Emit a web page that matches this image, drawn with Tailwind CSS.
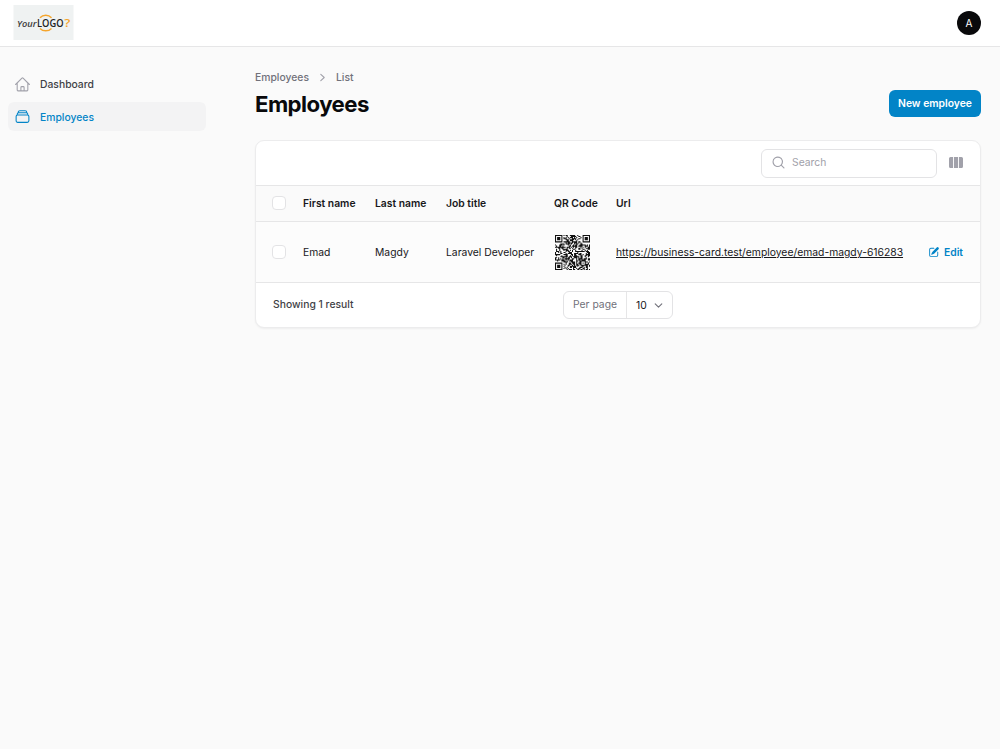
<!DOCTYPE html>
<html lang="en">
<head>
    <meta charset="UTF-8">
    <title>Employees</title>
    <script src="https://cdn.jsdelivr.net/npm/@tailwindcss/browser@4"></script>
</head>
<body class="min-h-screen bg-[#fafafa] font-[Inter,sans-serif] text-[10.35px] leading-4 text-[#18181b]">
<header class="flex h-[47px] items-center justify-between border-b border-[#e6e6e7] bg-white pl-[13px] pr-[19px]">
    <svg class="h-9 w-[61px]" viewBox="0 0 61 36">
        <rect x=".5" width="60" height="35" fill="#eff2f2"/>
        <path d="M27 12.8a8 8 0 0 1 11.5 0M27 23.4a8 8 0 0 0 11.5 0" fill="none" stroke="#f5a52c" stroke-width="1.5"/>
        <text x="4" y="22" font-size="9" font-weight="600" font-style="italic" fill="#3b3b3b" textLength="19.5" lengthAdjust="spacingAndGlyphs" font-family="Open Sans, sans-serif">Your</text>
        <text x="24" y="22" font-size="10" font-weight="600" fill="#222" textLength="26.5" lengthAdjust="spacingAndGlyphs" font-family="Open Sans, sans-serif">LOGO</text>
        <text x="51.2" y="22" font-size="10.5" font-weight="600" fill="#f5a52c" textLength="6" lengthAdjust="spacingAndGlyphs" font-family="Open Sans, sans-serif">?</text>
    </svg>
    <div class="flex size-6 items-center justify-center rounded-full bg-[#09090b] text-[10px] text-white">A</div>
</header>

<div class="flex">
    <aside class="w-[206px] shrink-0 pl-2 pt-[23px] font-medium">
        <nav class="space-y-[3px]">
            <a class="flex h-[29px] items-center gap-[9px] rounded-md px-[6px] text-[#3f3f46]">
                <svg class="size-[17px] text-[#a1a1aa]" viewBox="0 0 24 24" fill="none" stroke="currentColor" stroke-width="1.5" stroke-linecap="round" stroke-linejoin="round"><path d="m2.25 12 8.954-8.955c.44-.439 1.152-.439 1.591 0L21.75 12M4.5 9.75v10.125c0 .621.504 1.125 1.125 1.125H9.75v-4.875c0-.621.504-1.125 1.125-1.125h2.25c.621 0 1.125.504 1.125 1.125V21h4.125c.621 0 1.125-.504 1.125-1.125V9.75M8.25 21h8.25"/></svg>
                <span class="pb-[2px]">Dashboard</span>
            </a>
            <a class="flex h-[29px] items-center gap-[9px] rounded-md bg-[#f3f3f4] px-[6px] text-[#0284c7]">
                <svg class="size-[17px]" viewBox="0 0 24 24" fill="none" stroke="currentColor" stroke-width="1.5" stroke-linecap="round" stroke-linejoin="round"><path d="M6 6.878V6a2.25 2.25 0 0 1 2.25-2.25h7.5A2.25 2.25 0 0 1 18 6v.878m-12 0c.235-.083.487-.128.75-.128h10.5c.263 0 .515.045.75.128m-12 0A2.25 2.25 0 0 0 4.5 9v.878m13.5-3A2.25 2.25 0 0 1 19.5 9v.878m0 0a2.246 2.246 0 0 0-.75-.128H5.25c-.263 0-.515.045-.75.128m15 0A2.25 2.25 0 0 1 21 12v6a2.25 2.25 0 0 1-2.25 2.25H5.25A2.25 2.25 0 0 1 3 18v-6c0-.98.626-1.813 1.5-2.122"/></svg>
                Employees
            </a>
        </nav>
    </aside>

    <main class="ml-[49px] w-[726px] pt-[22px]">
        <div class="flex items-end justify-between">
            <div>
                <div class="flex h-4 items-center gap-[6px] font-medium text-[#71717a]">
                    Employees
                    <svg class="size-[15px] text-[#a1a1aa]" viewBox="0 0 20 20" fill="currentColor"><path fill-rule="evenodd" d="M7.21 14.77a.75.75 0 0 1 .02-1.06L11.168 10 7.23 6.29a.75.75 0 1 1 1.04-1.08l4.5 4.25a.75.75 0 0 1 0 1.08l-4.5 4.25a.75.75 0 0 1-1.06-.02Z"/></svg>
                    List
                </div>
                <h1 class="mt-[5px] text-[22.2px] font-bold leading-7 tracking-tight text-[#09090b]">Employees</h1>
            </div>
            <button class="mb-px h-[27px] w-[92px] rounded-md bg-[#0284c7] pb-[2px] font-semibold text-white">New employee</button>
        </div>

        <section class="mt-[22px] overflow-hidden rounded-[9px] border border-[#ececed] bg-white shadow-xs">
            <div class="flex h-[44px] items-center justify-end gap-3 pr-[17px]">
                <div class="flex h-[29px] w-[176px] items-center gap-[6px] rounded-md border border-[#e3e3e5] px-[9px] text-[#a1a1aa]">
                    <svg class="mb-px size-[15px]" viewBox="0 0 20 20" fill="currentColor"><path fill-rule="evenodd" d="M9 3.5a5.5 5.5 0 1 0 0 11 5.5 5.5 0 0 0 0-11ZM2 9a7 7 0 1 1 12.452 4.391l3.328 3.329a.75.75 0 1 1-1.06 1.06l-3.329-3.328A7 7 0 0 1 2 9Z"/></svg>
                    <span class="pb-[2px]">Search</span>
                </div>
                <svg class="mb-[2px] h-[11px] w-[14px] text-[#a1a1aa]" viewBox="0 0 14 11" fill="currentColor"><path d="M1.5 0h2.6v11H1.5A1.5 1.5 0 0 1 0 9.5v-8A1.5 1.5 0 0 1 1.5 0ZM5 0h4v11H5ZM9.9 0h2.6A1.5 1.5 0 0 1 14 1.5v8a1.5 1.5 0 0 1-1.5 1.5H9.9Z"/></svg>
            </div>
            <table class="w-full table-fixed border-y border-[#e6e6e7] bg-[#fafafa] text-left">
                <colgroup>
                    <col class="w-[47px]"><col class="w-[72px]"><col class="w-[71px]"><col class="w-[108px]"><col class="w-[62px]"><col class="w-[310px]"><col>
                </colgroup>
                <thead>
                <tr class="h-[36px] border-b border-[#e6e6e7] [&>th]:pb-[2px] [&>th]:font-semibold">
                    <th class="pl-[16px]"><span class="block size-[14px] rounded border border-[#e3e3e5] bg-white"></span></th>
                    <th>First name</th>
                    <th>Last name</th>
                    <th>Job title</th>
                    <th>QR Code</th>
                    <th>Url</th>
                    <th></th>
                </tr>
                </thead>
                <tbody>
                <tr class="h-[61px] bg-[#fcfcfc]">
                    <td class="pl-[16px]"><span class="block size-[14px] rounded border border-[#e3e3e5] bg-white"></span></td>
                    <td>Emad</td>
                    <td>Magdy</td>
                    <td>Laravel Developer</td>
                    <td><svg id="qr" class="ml-px size-[35px]" viewBox="0 0 33 33"></svg></td>
                    <td class="whitespace-nowrap"><a class="underline">https://business-card.test/employee/emad-magdy-616283</a></td>
                    <td class="pr-[17px]">
                        <a class="flex items-center justify-end gap-1 font-semibold text-[#0284c7]">
                            <svg class="size-[12px]" viewBox="0 0 20 20" fill="currentColor"><path d="m5.433 13.917 1.262-3.155A4 4 0 0 1 7.58 9.42l6.92-6.918a2.121 2.121 0 0 1 3 3l-6.92 6.918c-.383.383-.84.685-1.343.886l-3.154 1.262a.5.5 0 0 1-.65-.65Z"/><path d="M3.5 5.75c0-.69.56-1.25 1.25-1.25H10A.75.75 0 0 0 10 3H4.75A2.75 2.75 0 0 0 2 5.75v9.5A2.75 2.75 0 0 0 4.75 18h9.5A2.75 2.75 0 0 0 17 15.25V10a.75.75 0 0 0-1.5 0v5.25c0 .69-.56 1.25-1.25 1.25h-9.5c-.69 0-1.25-.56-1.25-1.25v-9.5Z"/></svg>
                            Edit
                        </a>
                    </td>
                </tr>
                </tbody>
            </table>
            <div class="grid h-[44px] grid-cols-[1fr_auto_1fr] items-center px-[17px]">
                <span class="pb-[3px] font-medium text-[#3f3f46]">Showing 1 result</span>
                <div class="flex h-[28px] w-[110px] items-center rounded-md border border-[#e3e3e5]">
                    <span class="flex h-full w-[63px] items-center border-r border-[#e6e6e7] pb-[2px] pl-[9px] text-[#71717a]">Per page</span>
                    <span class="flex flex-1 items-center justify-between pl-[9px] pr-[8px]">10
                        <svg class="size-[11px] text-[#71717a]" viewBox="0 0 20 20" fill="none" stroke="currentColor" stroke-width="2" stroke-linecap="round" stroke-linejoin="round"><path d="m4 7 6 6 6-6"/></svg>
                    </span>
                </div>
            </div>
        </section>
    </main>
</div>

<script>
    // QR code, 33 x 33 modules
    const size = 33;
    let seed = 616283;
    let d = '';
    function finder(x, y) {
        for (const [cx, cy] of [[3, 3], [size - 4, 3], [3, size - 4]]) {
            const r = Math.max(Math.abs(x - cx), Math.abs(y - cy));
            if (r <= 4) return r === 3 || r <= 1 ? 1 : 0;
        }
        const a = Math.max(Math.abs(x - 26), Math.abs(y - 26));
        if (a <= 2) return a === 1 ? 0 : 1;
        return -1;
    }
    for (let y = 0; y < size; y++) {
        for (let x = 0; x < size; x++) {
            seed = (seed * 48271) % 2147483647;
            const f = finder(x, y);
            if (f === 1 || (f === -1 && seed / 2147483647 > 0.48)) d += `M${x} ${y}h1v1h-1z`;
        }
    }
    document.getElementById('qr').innerHTML = `<path d="${d}" fill="#111"/>`;
</script>
</body>
</html>
